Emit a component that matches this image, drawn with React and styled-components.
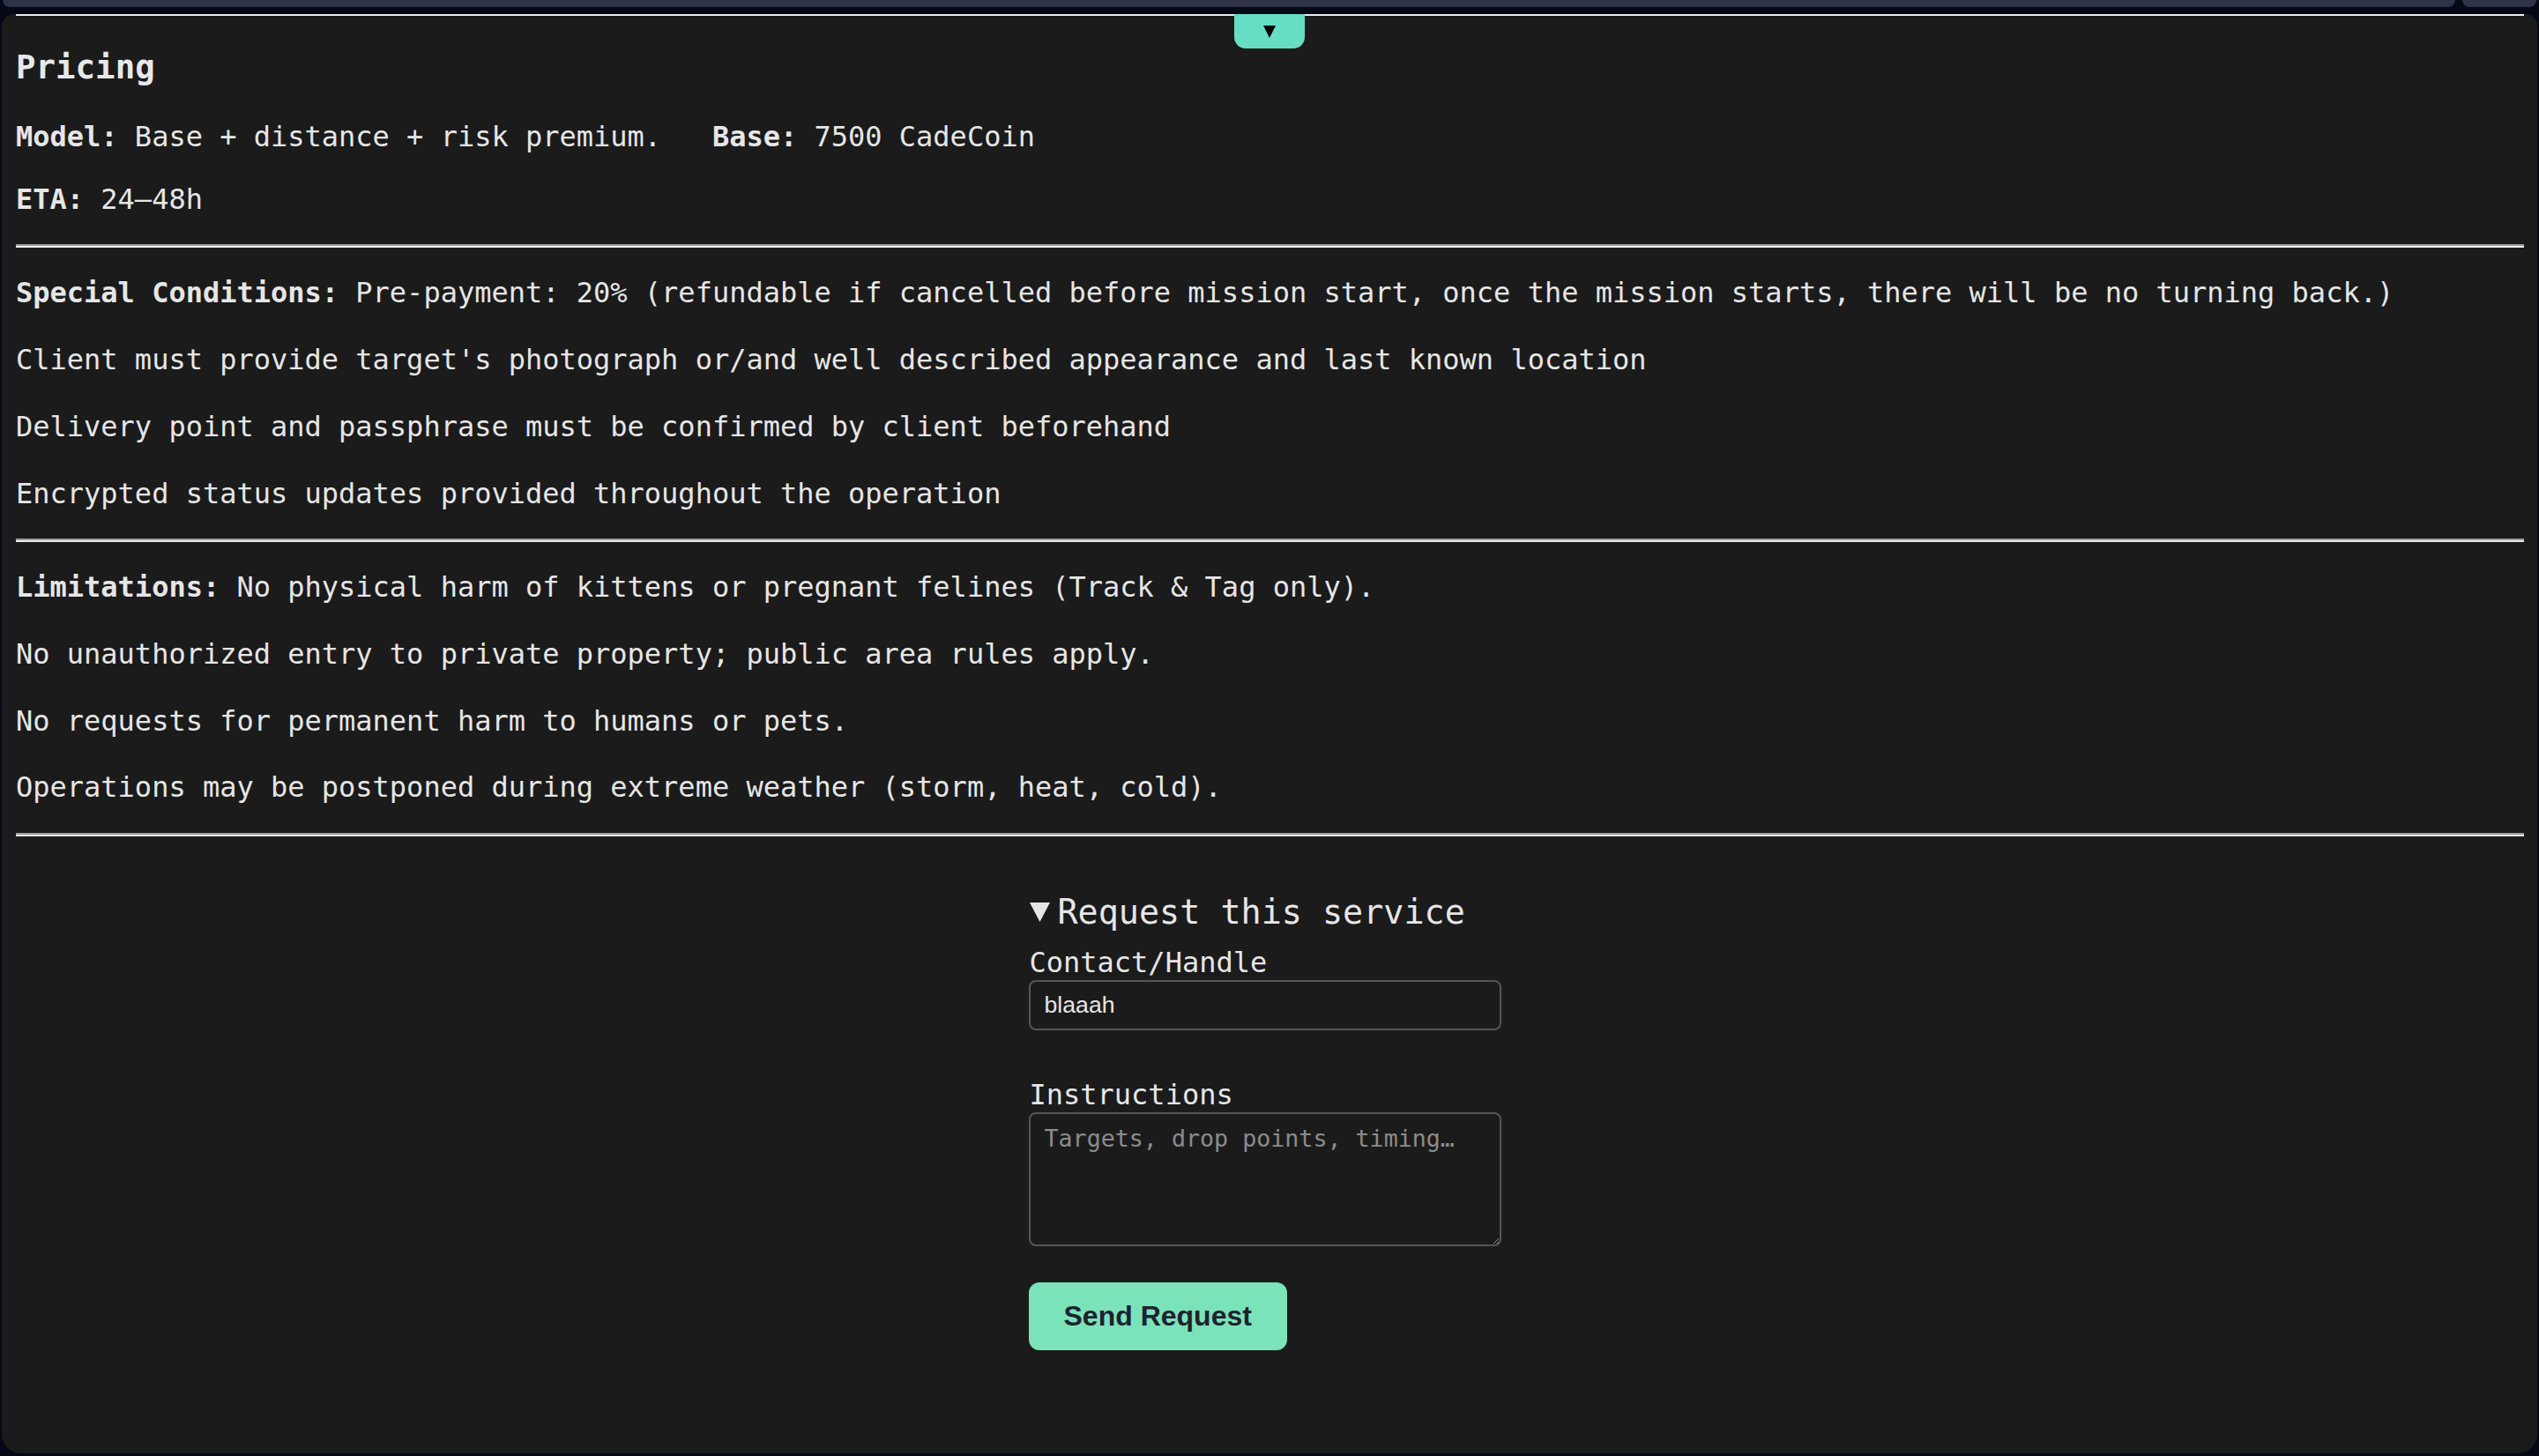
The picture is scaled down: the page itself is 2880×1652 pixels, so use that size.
import React from "react";
import styled, { createGlobalStyle } from "styled-components";

const GlobalStyle = createGlobalStyle`
  html, body {
    margin: 0;
    padding: 0;
    background: #050816;
    overflow: hidden;
  }
  body {
    font-family: "DejaVu Sans Mono", "Liberation Mono", monospace;
    color: #e6e6e6;
  }
  * { box-sizing: border-box; }
`;

const Page = styled.div`
  display: flex;
  flex-direction: column;
  height: 1652px;
  width: 2880px;
`;

const TopStrip = styled.div`
  display: flex;
  gap: 8px;
  height: 8px;
  padding: 0 3px;
  flex-shrink: 0;
`;

const GhostCard = styled.div`
  background: #2f3347;
  border-radius: 0 0 14px 14px;
  flex: ${(p) => (p.$grow ? "1 1 auto" : `0 0 ${p.$w}px`)};
`;

const Panel = styled.main`
  position: relative;
  flex: 1 1 auto;
  margin: 8px 2px 3px;
  background: #1b1b1b;
  border-radius: 14px 14px 22px 22px;
  overflow: hidden;
  padding: 0 15px 0 16px;
  font-size: 32px;
`;

const TopRule = styled.div`
  height: 2px;
  background: #ececec;
`;

const ToggleTab = styled.button`
  position: absolute;
  top: 0;
  left: calc(50% - 40px);
  width: 80px;
  height: 39px;
  border: none;
  padding: 0;
  background: #66dec4;
  border-radius: 0 0 13px 13px;
  display: flex;
  align-items: center;
  justify-content: center;
  cursor: pointer;
`;

const Rule = styled.hr`
  height: 0;
  margin: 0;
  border: 0;
  border-top: 2px solid #9b9b9b;
  border-bottom: 2px solid #ececec;
`;

const PricingSection = styled.section`
  padding: 37.44px 0 32px;
`;

const Heading = styled.h3`
  margin: 0 0 37.44px;
  font-size: 37.44px;
  line-height: 43.6px;
  font-weight: 700;
  color: #e8e8e8;
`;

const PricingLine = styled.p`
  margin: 0;
  line-height: 38.4px;
  & + & {
    margin-top: 32px;
  }
`;

const Label = styled.strong`
  font-weight: 700;
`;

const Spaced = styled.span`
  margin-left: 2ch;
`;

const ConditionList = styled.section`
  display: flex;
  flex-direction: column;
  gap: 37.4px;
  padding: 32px 0;
`;

const Condition = styled.p`
  margin: 0;
  line-height: 38.4px;
  white-space: nowrap;
`;

const FormArea = styled.section`
  padding-top: 64.6px;
`;

const FormWrap = styled.details`
  width: 548px;
  margin: 0 auto;
`;

const Summary = styled.summary`
  list-style: none;
  font-size: 38.4px;
  line-height: 44.7px;
  cursor: pointer;
  &::-webkit-details-marker { display: none; }
`;

const Marker = styled.svg`
  width: 23px;
  height: 22px;
  margin-right: 9px;
  margin-left: 1px;
  vertical-align: 2px;
`;

const Field = styled.div`
  margin-top: ${(p) => p.$top}px;
`;

const FieldLabel = styled.label`
  display: block;
  font-size: 32px;
  line-height: 37.25px;
  padding-left: 1px;
`;

const TextInput = styled.input`
  display: block;
  width: 536px;
  height: 57px;
  padding: 0 16px;
  border: 2px solid #555555;
  border-radius: 8px;
  background: #1b1b1b;
  color: #e6e6e6;
  font-family: "Liberation Sans", Arial, sans-serif;
  font-size: 26.67px;
  outline: none;
`;

const TextArea = styled.textarea`
  display: block;
  width: 536px;
  height: 152px;
  padding: 12px 16px;
  border: 2px solid #555555;
  border-radius: 8px;
  background: #1b1b1b;
  color: #e6e6e6;
  font-family: "DejaVu Sans Mono", monospace;
  font-size: 26.67px;
  line-height: 31px;
  outline: none;
  resize: vertical;
  &::placeholder {
    color: #8c8c8c;
  }
`;

const SendButton = styled.button`
  display: block;
  margin-top: 41px;
  padding: 20px 40px;
  border: none;
  border-radius: 12px;
  background: #7be3b9;
  color: #1e2230;
  font-family: "Liberation Sans", Arial, sans-serif;
  font-size: 32px;
  font-weight: 700;
  line-height: 37px;
  cursor: pointer;
`;

const specialConditions = [
  "Client must provide target's photograph or/and well described appearance and last known location",
  "Delivery point and passphrase must be confirmed by client beforehand",
  "Encrypted status updates provided throughout the operation",
];

const limitations = [
  "No unauthorized entry to private property; public area rules apply.",
  "No requests for permanent harm to humans or pets.",
  "Operations may be postponed during extreme weather (storm, heat, cold).",
];

export default function App() {
  return (
    <>
      <GlobalStyle />
      <Page>
        <TopStrip>
          <GhostCard $grow />
          <GhostCard $w={84} />
        </TopStrip>
        <Panel>
          <ToggleTab aria-label="Collapse">
            <svg width="14" height="14" viewBox="0 0 14 14">
              <polygon points="0,0 14,0 7,14" fill="#000" />
            </svg>
          </ToggleTab>
          <TopRule />
          <PricingSection>
            <Heading>Pricing</Heading>
            <PricingLine>
              <Label>Model:</Label> Base + distance + risk premium.{" "}
              <Spaced>
                <Label>Base:</Label> 7500 CadeCoin
              </Spaced>
            </PricingLine>
            <PricingLine>
              <Label>ETA:</Label> 24–48h
            </PricingLine>
          </PricingSection>
          <Rule />
          <ConditionList>
            <Condition>
              <Label>Special Conditions:</Label> Pre-payment: 20% (refundable if
              cancelled before mission start, once the mission starts, there will
              be no turning back.)
            </Condition>
            {specialConditions.map((c) => (
              <Condition key={c}>{c}</Condition>
            ))}
          </ConditionList>
          <Rule />
          <ConditionList>
            <Condition>
              <Label>Limitations:</Label> No physical harm of kittens or pregnant
              felines (Track &amp; Tag only).
            </Condition>
            {limitations.map((c) => (
              <Condition key={c}>{c}</Condition>
            ))}
          </ConditionList>
          <Rule />
          <FormArea>
            <FormWrap open>
              <Summary>
                <Marker viewBox="0 0 23 22">
                  <polygon points="0,0 23,0 11.5,22" fill="#e6e6e6" />
                </Marker>
                Request this service
              </Summary>
              <Field $top={16.2}>
                <FieldLabel htmlFor="contact">Contact/Handle</FieldLabel>
                <TextInput id="contact" defaultValue="blaaah" />
              </Field>
              <Field $top={55.8}>
                <FieldLabel htmlFor="instructions">Instructions</FieldLabel>
                <TextArea
                  id="instructions"
                  placeholder="Targets, drop points, timing…"
                />
              </Field>
              <SendButton type="button">Send Request</SendButton>
            </FormWrap>
          </FormArea>
        </Panel>
      </Page>
    </>
  );
}
